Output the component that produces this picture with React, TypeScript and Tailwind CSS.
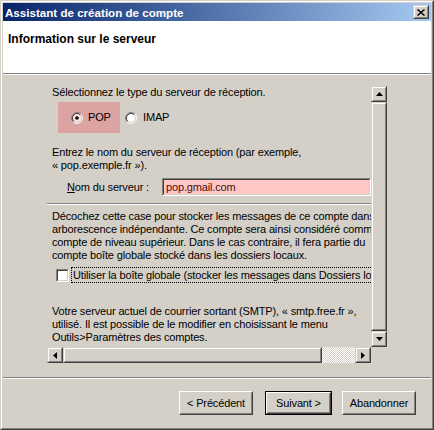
import type { ReactNode } from "react";

// Windows classic bevels
const Raised = ({ className = "", children }: { className?: string; children?: ReactNode }) => (
  <div className={`border border-t-[#d4d0c8] border-l-[#d4d0c8] border-r-[#404040] border-b-[#404040] ${className}`}>
    <div className="w-full h-full border border-t-white border-l-white border-r-[#808080] border-b-[#808080] bg-[#d4d0c8] flex items-center justify-center">
      {children}
    </div>
  </div>
);

const Arrow = ({ dir }: { dir: "up" | "down" | "left" | "right" }) => {
  const pts = {
    up: "3.5,0 7,4 0,4",
    down: "0,0 7,0 3.5,4",
    left: "4,0 4,7 0,3.5",
    right: "0,0 4,3.5 0,7",
  }[dir];
  const horiz = dir === "left" || dir === "right";
  return (
    <svg width={horiz ? 4 : 7} height={horiz ? 7 : 4} viewBox={horiz ? "0 0 4 7" : "0 0 7 4"}>
      <polygon points={pts} fill="#000" />
    </svg>
  );
};

const Radio = ({ checked, fill = "#ffffff" }: { checked?: boolean; fill?: string }) => (
  <svg width="12" height="12" viewBox="0 0 12 12" className="shrink-0">
    <circle cx="6" cy="6" r="4.5" fill={fill} />
    <path d="M2.11 9.89 A5.5 5.5 0 0 1 9.89 2.11" stroke="#808080" fill="none" />
    <path d="M9.89 2.11 A5.5 5.5 0 0 1 2.11 9.89" stroke="#ffffff" fill="none" />
    <path d="M2.82 9.18 A4.5 4.5 0 0 1 9.18 2.82" stroke="#404040" fill="none" />
    <path d="M9.18 2.82 A4.5 4.5 0 0 1 2.82 9.18" stroke="#d4d0c8" fill="none" />
    {checked && <circle cx="6" cy="6" r="1.8" fill="#000" />}
  </svg>
);

const Button = ({ label, width, isDefault }: { label: string; width: string; isDefault?: boolean }) => (
  <div className={`${width} h-[24px] ${isDefault ? "border border-black" : ""}`}>
    <div className="w-full h-full border border-t-white border-l-white border-r-[#404040] border-b-[#404040]">
      <div className="w-full h-full border border-t-[#d4d0c8] border-l-[#d4d0c8] border-r-[#808080] border-b-[#808080] flex items-center justify-center">
        {label}
      </div>
    </div>
  </div>
);

const dither = "bg-[image:repeating-conic-gradient(#ffffff_0_25%,#d4d0c8_0_50%)] bg-[length:2px_2px]";

export default function App() {
  return (
    <div className="w-[434px] h-[430px] bg-[#d4d0c8] text-black text-[11px] leading-[13px] tracking-[-0.15px] font-['Liberation_Sans',Arial,sans-serif] border border-t-[#d4d0c8] border-l-[#d4d0c8] border-r-[#404040] border-b-[#404040]">
      <div className="h-full border border-t-white border-l-white border-r-[#808080] border-b-[#808080] p-px flex flex-col">
        {/* title bar */}
        <div className="h-[18px] flex items-center justify-between bg-gradient-to-r from-[#0a246a] to-[#a6caf0] pl-[2px] pr-[2px]">
          <span className="text-white font-bold text-[11.6px] tracking-normal">Assistant de création de compte</span>
          <Raised className="w-[16px] h-[14px]">
            <svg width="8" height="7" viewBox="0 0 8 7">
              <path d="M0.5 0.5 L7.5 6.5 M7.5 0.5 L0.5 6.5" stroke="#000" strokeWidth="1.5" />
            </svg>
          </Raised>
        </div>

        {/* header */}
        <div className="h-[52px] bg-white pt-[12px] pl-[5px] font-bold text-[12px] tracking-normal">Information sur le serveur</div>
        <div className="h-px bg-[#808080]" />
        <div className="h-px bg-white" />

        {/* body */}
        <div className="flex-1 flex flex-col">
          <div className="ml-[44px] mt-[11px] w-[340px] h-[277px] flex flex-col">
            <div className="flex h-[261px]">
              <div className="w-[324px] h-full overflow-hidden whitespace-nowrap">
                <div className="pl-[5px]">Sélectionnez le type du serveur de réception.</div>
                <div className="flex items-center mt-[3px] ml-[11px] h-[31px]">
                  <div className="w-[62px] h-full bg-[#dca3a3] flex items-center pl-[13px] gap-[5px]">
                    <Radio checked fill="#f7e2e2" />
                    <span>POP</span>
                  </div>
                  <div className="flex items-center ml-[5px] gap-[6px]">
                    <Radio />
                    <span>IMAP</span>
                  </div>
                </div>

                <div className="pl-[5px] mt-[13px]">
                  <div>Entrez le nom du serveur de réception (par exemple,</div>
                  <div>« pop.exemple.fr »).</div>
                </div>

                <div className="flex items-center h-[18px] mt-[6px] pl-[20px]">
                  <div className="w-[95px] shrink-0">
                    <span className="underline">N</span>om du serveur :
                  </div>
                  <div className="w-[209px] h-[18px] shrink-0 border border-t-[#808080] border-l-[#808080] border-r-white border-b-white">
                    <div className="w-full h-full border border-t-[#404040] border-l-[#404040] border-r-[#d4d0c8] border-b-[#d4d0c8] bg-[#ffc6c6] pl-[2px] flex items-center text-[#4a1010]">
                      pop.gmail.com
                    </div>
                  </div>
                </div>

                <div className="mt-[7px] h-px bg-[#808080]" />
                <div className="h-px bg-white" />

                <div className="pl-[5px] mt-[5px]">
                  <div>Décochez cette case pour stocker les messages de ce compte dans une</div>
                  <div>arborescence indépendante. Ce compte sera ainsi considéré comme un</div>
                  <div>compte de niveau supérieur. Dans le cas contraire, il fera partie du</div>
                  <div>compte boîte globale stocké dans les dossiers locaux.</div>
                </div>

                <div className="flex items-center h-[18px] mt-[4px] pl-[9px]">
                  <div className="w-[13px] h-[13px] shrink-0 border border-t-[#808080] border-l-[#808080] border-r-white border-b-white">
                    <div className="w-full h-full border border-t-[#404040] border-l-[#404040] border-r-[#d4d0c8] border-b-[#d4d0c8] bg-white" />
                  </div>
                  <div className="ml-[2px] h-[16px] shrink-0 border border-dotted border-black pl-[1px] pr-[40px] flex items-center">
                    Utiliser la boîte globale (stocker les messages dans Dossiers locaux)
                  </div>
                </div>

                <div className="pl-[5px] mt-[21px]">
                  <div>Votre serveur actuel de courrier sortant (SMTP), « smtp.free.fr »,</div>
                  <div>utilisé. Il est possible de le modifier en choisissant le menu</div>
                  <div>Outils&gt;Paramètres des comptes.</div>
                </div>
              </div>

              {/* vertical scrollbar */}
              <div className="w-[16px] h-full flex flex-col">
                <Raised className="w-[16px] h-[16px]"><Arrow dir="up" /></Raised>
                <Raised className="w-[16px] flex-1" />
                <Raised className="w-[16px] h-[16px]"><Arrow dir="down" /></Raised>
              </div>
            </div>

            {/* horizontal scrollbar */}
            <div className="flex h-[16px]">
              <div className="w-[324px] h-full flex">
                <Raised className="w-[16px] h-[16px]"><Arrow dir="left" /></Raised>
                <Raised className="w-[259px] h-[16px]" />
                <div className={`flex-1 h-full ${dither}`} />
                <Raised className="w-[16px] h-[16px]"><Arrow dir="right" /></Raised>
              </div>
              <div className="w-[16px]" />
            </div>
          </div>

          <div className="mt-[14px] h-px bg-[#808080]" />
          <div className="h-px bg-white" />

          {/* wizard buttons */}
          <div className="flex pt-[12px] pl-[176px]">
            <Button label="< Précédent" width="w-[74px]" />
            <div className="ml-[12px]">
              <Button label="Suivant >" width="w-[67px]" isDefault />
            </div>
            <div className="ml-[10px]">
              <Button label="Abandonner" width="w-[74px]" />
            </div>
          </div>
        </div>
      </div>
    </div>
  );
}
